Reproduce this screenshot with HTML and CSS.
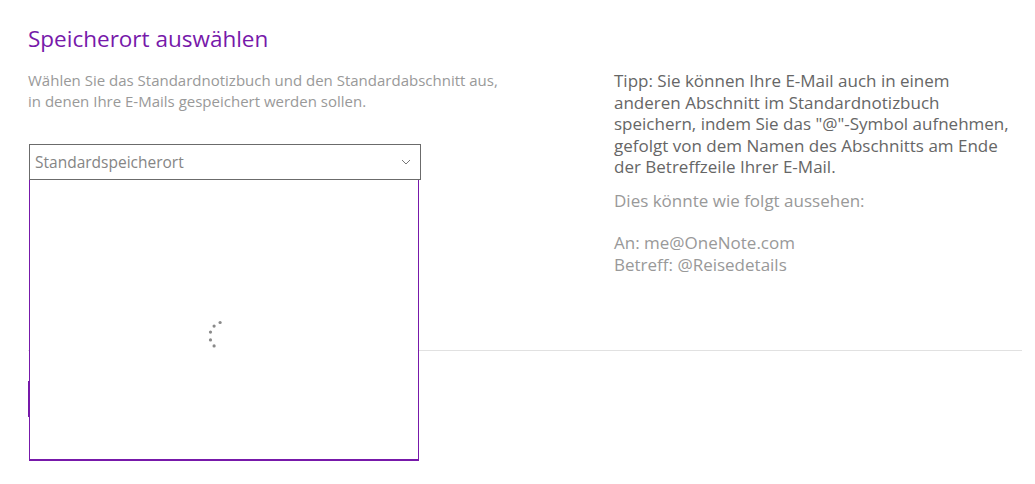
FILE: index.html
```html
<!DOCTYPE html>
<html lang="de">
<head>
    <meta charset="UTF-8">
    <meta name="viewport" content="width=device-width, initial-scale=1.0">
    <title>Speicherort auswählen</title>
    <link rel="stylesheet" href="styles.css">
</head>
<body>
    <div class="page">
        <div class="columns">
            <div class="location">
                <h1 class="location__title">Speicherort auswählen</h1>
                <p class="location__desc">Wählen Sie das Standardnotizbuch und den Standardabschnitt aus,<br>in denen Ihre E-Mails gespeichert werden sollen.</p>
                <div class="picker">
                    <div class="picker__field">
                        <span class="picker__value">Standardspeicherort</span>
                        <svg class="picker__chevron" viewBox="0 0 10 6" width="10px" height="6px" aria-hidden="true">
                            <polyline points="1 1,5 5,9 1" fill="none" stroke="#777" stroke-width="1" />
                        </svg>
                    </div>
                    <div class="picker__panel">
                        <svg class="spinner" viewBox="0 0 36 36" width="36px" height="36px" aria-hidden="true">
                            <g fill="#8a8a8a">
                                <circle cx="14.1" cy="4.5" r="1.6" />
                                <circle cx="8.1" cy="8.1" r="1.6" />
                                <circle cx="4.5" cy="14.1" r="1.6" />
                                <circle cx="4.5" cy="21.9" r="1.6" />
                                <circle cx="8.1" cy="27.9" r="1.6" />
                            </g>
                        </svg>
                    </div>
                </div>
            </div>
            <div class="tip">
                <p class="tip__text">Tipp: Sie können Ihre E-Mail auch in einem<br>anderen Abschnitt im Standardnotizbuch<br>speichern, indem Sie das "@"-Symbol aufnehmen,<br>gefolgt von dem Namen des Abschnitts am Ende<br>der Betreffzeile Ihrer E-Mail.</p>
                <p class="tip__example">Dies könnte wie folgt aussehen:</p>
                <p class="tip__example tip__example--mail">An: me@OneNote.com<br>Betreff: @Reisedetails</p>
            </div>
        </div>
        <hr class="divider">
        <button class="save" type="button">Speichern</button>
    </div>
</body>
</html>
```

FILE: styles.css
```css
* {
    border: 0;
    box-sizing: border-box;
    margin: 0;
    padding: 0;
}
:root {
    --purple: #7719aa;
    --text: #666;
    --muted: #999;
    font-family: "Segoe UI", "Open Sans", sans-serif;
}
body {
    background-color: #fff;
}
.page {
    padding: 25px 13px 68px 28px;
}
.columns {
    display: flex;
    align-items: flex-start;
}
.location {
    width: 393px;
}
.location__title {
    color: var(--purple);
    font-size: 22.5px;
    font-weight: 400;
    line-height: 28px;
}
.location__desc {
    color: var(--muted);
    font-size: 15px;
    line-height: 21px;
    margin-top: 17px;
    white-space: nowrap;
}
.picker {
    margin: 32px 0 0 1px;
    position: relative;
}
.picker__field {
    display: flex;
    align-items: center;
    border: 1px solid #6b6b6b;
    height: 36px;
    padding: 0 9px 0 5px;
}
.picker__value {
    color: #858585;
    flex: 1;
    font-size: 15.5px;
}
.picker__chevron {
    display: block;
}
.picker__panel {
    background-color: #fff;
    border: 1px solid var(--purple);
    border-top: 0;
    border-bottom-width: 2px;
    display: flex;
    justify-content: center;
    padding-top: 138px;
    position: absolute;
    top: 100%;
    left: 0;
    width: 390px;
    height: 281px;
    z-index: 2;
}
.spinner {
    display: block;
}
.tip {
    margin: 45px 0 0 193px;
    font-size: 17px;
    line-height: 21.5px;
}
.tip__text {
    color: var(--text);
}
.tip__example {
    color: var(--muted);
    margin-top: 12px;
}
.tip__example--mail {
    margin-top: 21px;
}
.divider {
    border-top: 1px solid #e1e1e1;
    margin-top: 75px;
}
.save {
    background-color: var(--purple);
    color: #fff;
    display: block;
    font: 14px "Segoe UI", "Open Sans", sans-serif;
    height: 36px;
    margin-top: 30px;
    padding: 0 24px;
}
```
